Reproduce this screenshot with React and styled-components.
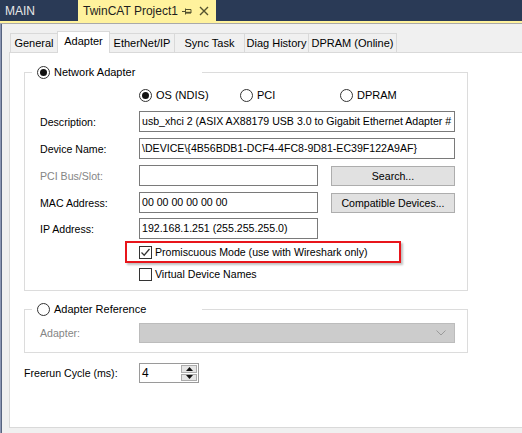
import React from 'react'
import styled, { createGlobalStyle } from 'styled-components'

const GlobalStyle = createGlobalStyle`
  html, body {
    margin: 0;
    padding: 0;
    background: #f0f0f0;
  }
  body {
    font-family: "Liberation Sans", Arial, sans-serif;
    font-size: 10.6px;
    color: #000;
  }
  #root {
    width: 522px;
    height: 433px;
    overflow: hidden;
  }
`;

const Window = styled.div`
  width: 522px;
  height: 433px;
  display: flex;
  flex-direction: column;
  overflow: hidden;
`;

const DocBar = styled.div`
  height: 21px;
  flex-shrink: 0;
  background: #2a3a56;
  display: flex;
`;

const DocTab = styled.div`
  width: ${p => p.$w}px;
  box-sizing: border-box;
  padding: 0 7px 0 5px;
  display: flex;
  align-items: center;
  font-size: 12px;
  background: ${p => (p.$active ? '#fff29d' : 'transparent')};
  color: ${p => (p.$active ? '#1e1e1e' : '#e8e8e8')};
`;

const DocIcon = styled.svg`
  margin-left: ${p => (p.$gap ? `${p.$gap}px` : 'auto')};
  flex-shrink: 0;
`;

const Body = styled.div`
  flex: 1;
  display: flex;
  flex-direction: column;
  border-top: 2px solid #fff29d;
  box-shadow: inset 0 1px 0 #a9a9a9, inset 1px 0 0 #8b96b3, inset 2px 0 0 #56637f;
  padding: 8px 0 5px 9px;
  min-height: 0;
`;

const TabStrip = styled.div`
  display: flex;
  align-items: flex-end;
  height: 22px;
  margin: 0 0 -1px 2px;
  position: relative;
  z-index: 1;
`;

const Tab = styled.div`
  width: ${p => p.$w}px;
  box-sizing: border-box;
  height: ${p => (p.$active ? 22 : 19)}px;
  margin-bottom: ${p => (p.$active ? 0 : 1)}px;
  border: 1px solid #d9d9d9;
  border-bottom: none;
  margin-left: -1px;
  background: ${p => (p.$active ? '#fff' : '#f0f0f0')};
  display: flex;
  align-items: center;
  justify-content: center;
  padding-bottom: ${p => (p.$active ? 3 : 0)}px;
  font-size: 11px;
`;

const Page = styled.div`
  flex: 1;
  background: #fff;
  border: 1px solid #d9d9d9;
  border-right: none;
  padding: 12px 0 0 14px;
`;

const Group = styled.fieldset`
  width: 444px;
  box-sizing: border-box;
  margin: ${p => p.$top}px 0 0 0;
  padding: 0;
  border: 1px solid #dcdcdc;
  min-inline-size: 0;
`;

const Legend = styled.legend`
  width: 170px;
  box-sizing: border-box;
  margin-left: 7px;
  padding: 0 0 0 5px;
  height: 14px;
  display: flex;
  align-items: center;
  font-size: 11px;
`;

const GroupContent = styled.div`
  padding: ${p => p.$pt}px 12px ${p => p.$pb}px 15px;
  display: flex;
  flex-direction: column;
`;

const RadioLabel = styled.span`
  display: inline-flex;
  align-items: center;
  gap: 4px;
  width: ${p => (p.$w ? `${p.$w}px` : 'auto')};
  white-space: nowrap;
`;

const RadioCircle = styled.span`
  width: 11px;
  height: 11px;
  border: 1px solid #333;
  border-radius: 50%;
  background: #fff;
  display: inline-flex;
  align-items: center;
  justify-content: center;
  flex-shrink: 0;
  &::after {
    content: '';
    width: 7px;
    height: 7px;
    border-radius: 50%;
    background: ${p => (p.$checked ? '#111' : 'transparent')};
  }
`;

const RadioRow = styled.div`
  display: flex;
  align-items: center;
  height: 18px;
  margin: 7px 0 0 99px;
  font-size: 11px;
`;

const FieldRow = styled.div`
  display: flex;
  align-items: center;
  height: 21px;
  margin-top: ${p => p.$mt}px;
`;

const Label = styled.span`
  width: ${p => p.$w || 99}px;
  flex-shrink: 0;
  color: ${p => (p.$disabled ? '#858585' : '#000')};
`;

const TextBox = styled.div`
  width: ${p => (p.$w ? `${p.$w}px` : 'auto')};
  flex: ${p => (p.$w ? 'none' : '1')};
  min-width: 0;
  height: 21px;
  box-sizing: border-box;
  border: 1px solid #7a7a7a;
  background: #fff;
  padding: 0 2px;
  line-height: 19px;
  white-space: nowrap;
  overflow: hidden;
`;

const Button = styled.div`
  flex: 1;
  margin-left: 13px;
  height: 20px;
  box-sizing: border-box;
  border: 1px solid #adadad;
  background: #e1e1e1;
  display: flex;
  align-items: center;
  justify-content: center;
`;

const CheckRow = styled.div`
  display: flex;
  align-items: center;
  gap: 3px;
  height: 18px;
  margin: ${p => p.$mt || 0}px 0 0 ${p => p.$ml}px;
`;

const Highlight = styled.div`
  width: 276px;
  box-sizing: border-box;
  margin: 2px 0 0 85px;
  border: 2px solid #e8151b;
  padding-left: 12px;
  box-shadow: 2px 2px 2px rgba(0, 0, 0, 0.25);
`;

const CheckBox = styled.span`
  width: 13px;
  height: 13px;
  box-sizing: border-box;
  border: 1px solid #333;
  background: #fff;
  display: inline-flex;
  align-items: center;
  justify-content: center;
  flex-shrink: 0;
`;

const Select = styled.div`
  flex: 1;
  height: 20px;
  box-sizing: border-box;
  border: 1px solid #bcbcbc;
  background: #cccccc;
  display: flex;
  align-items: center;
  justify-content: flex-end;
  padding-right: 8px;
`;

const FreerunRow = styled.div`
  display: flex;
  align-items: center;
  margin-top: 10px;
`;

const Spinner = styled.div`
  width: 60px;
  height: 20px;
  box-sizing: border-box;
  border: 1px solid #9a9a9a;
  background: #fff;
  display: flex;
`;

const SpinValue = styled.div`
  flex: 1;
  padding-left: 2px;
  line-height: 18px;
  font-size: 12px;
`;

const SpinButtons = styled.div`
  width: 16px;
  display: flex;
  flex-direction: column;
  gap: 1px;
  padding: 1px 1px 1px 0;
`;

const SpinButton = styled.div`
  flex: 1;
  border: 1px solid #acacac;
  background: #e5e5e5;
  display: flex;
  align-items: center;
  justify-content: center;
`;

const Radio = ({ checked, children, w }) => (
  <RadioLabel $w={w}>
    <RadioCircle $checked={checked} />
    {children}
  </RadioLabel>
)

const Check = ({ checked }) => (
  <CheckBox>
    {checked && (
      <svg width="11" height="11" viewBox="0 0 11 11">
        <path d="M1.5 5.5 L4.2 8.2 L9.5 2" fill="none" stroke="#333" strokeWidth="1.3" />
      </svg>
    )}
  </CheckBox>
)

const tabs = [
  { name: 'General', w: 48 },
  { name: 'Adapter', w: 53, active: true },
  { name: 'EtherNet/IP', w: 66 },
  { name: 'Sync Task', w: 71 },
  { name: 'Diag History', w: 65 },
  { name: 'DPRAM (Online)', w: 89 },
]

export default function App() {
  return (
    <Window>
      <GlobalStyle />
      <DocBar>
        <DocTab $w={78}>MAIN</DocTab>
        <DocTab $w={138} $active>
          TwinCAT Project1
          <DocIcon width="10" height="10" viewBox="0 0 10 10">
            <path d="M0 5.5h3.5M3.5 2.5v6M3.5 3.5h5.5v3.5H3.5" fill="none" stroke="#55532f" strokeWidth="1" />
            <path d="M3.5 6.5h5.5" stroke="#55532f" strokeWidth="1.4" />
          </DocIcon>
          <DocIcon $gap={7} width="10" height="10" viewBox="0 0 10 10">
            <path d="M1 1L9 9M9 1L1 9" stroke="#55532f" strokeWidth="1.4" />
          </DocIcon>
        </DocTab>
      </DocBar>
      <Body>
        <TabStrip>
          {tabs.map(t => (
            <Tab key={t.name} $w={t.w} $active={t.active}>{t.name}</Tab>
          ))}
        </TabStrip>
        <Page>
          <Group $top={0}>
            <Legend>
              <Radio checked>Network Adapter</Radio>
            </Legend>
            <GroupContent $pt={0} $pb={7}>
              <RadioRow>
                <Radio checked w={101}>OS (NDIS)</Radio>
                <Radio w={100}>PCI</Radio>
                <Radio>DPRAM</Radio>
              </RadioRow>
              <FieldRow $mt={7}>
                <Label>Description:</Label>
                <TextBox>usb_xhci 2 (ASIX AX88179 USB 3.0 to Gigabit Ethernet Adapter #</TextBox>
              </FieldRow>
              <FieldRow $mt={6}>
                <Label>Device Name:</Label>
                <TextBox>\DEVICE\{'{'}4B56BDB1-DCF4-4FC8-9D81-EC39F122A9AF{'}'}</TextBox>
              </FieldRow>
              <FieldRow $mt={6}>
                <Label $disabled>PCI Bus/Slot:</Label>
                <TextBox $w={179} />
                <Button>Search...</Button>
              </FieldRow>
              <FieldRow $mt={6}>
                <Label>MAC Address:</Label>
                <TextBox $w={179}>00 00 00 00 00 00</TextBox>
                <Button>Compatible Devices...</Button>
              </FieldRow>
              <FieldRow $mt={5}>
                <Label>IP Address:</Label>
                <TextBox $w={179}>192.168.1.251 (255.255.255.0)</TextBox>
              </FieldRow>
              <Highlight>
                <CheckRow $ml={0}>
                  <Check checked />
                  Promiscuous Mode (use with Wireshark only)
                </CheckRow>
              </Highlight>
              <CheckRow $ml={99} $mt={2}>
                <Check />
                Virtual Device Names
              </CheckRow>
            </GroupContent>
          </Group>
          <Group $top={11}>
            <Legend>
              <Radio>Adapter Reference</Radio>
            </Legend>
            <GroupContent $pt={6} $pb={9}>
              <FieldRow $mt={0}>
                <Label $disabled>Adapter:</Label>
                <Select>
                  <svg width="10" height="6" viewBox="0 0 10 6">
                    <path d="M0.5 0.5L5 5L9.5 0.5" fill="none" stroke="#9a9a9a" strokeWidth="1" />
                  </svg>
                </Select>
              </FieldRow>
            </GroupContent>
          </Group>
          <FreerunRow>
            <Label $w={115}>Freerun Cycle (ms):</Label>
            <Spinner>
              <SpinValue>4</SpinValue>
              <SpinButtons>
                <SpinButton>
                  <svg width="7" height="4" viewBox="0 0 7 4"><path d="M0 4L3.5 0L7 4Z" fill="#111" /></svg>
                </SpinButton>
                <SpinButton>
                  <svg width="7" height="4" viewBox="0 0 7 4"><path d="M0 0L3.5 4L7 0Z" fill="#111" /></svg>
                </SpinButton>
              </SpinButtons>
            </Spinner>
          </FreerunRow>
        </Page>
      </Body>
    </Window>
  )
}
